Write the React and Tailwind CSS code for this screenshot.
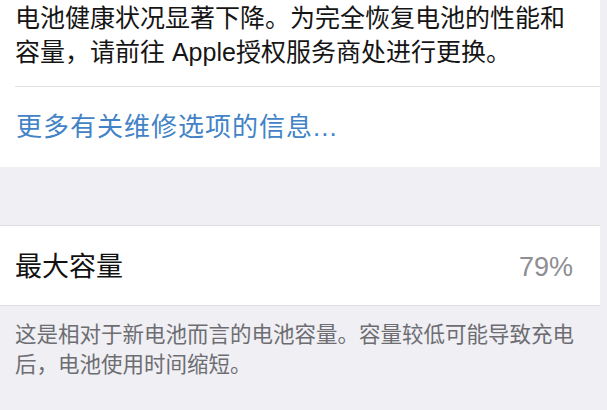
import React from 'react';

// 电池健康 · 设置页片段
const font = "font-['Liberation_Sans','Noto_Sans_CJK_SC',sans-serif]";

export default function App() {
  return (
    <div className={`w-[607px] h-[410px] overflow-hidden bg-[#efeff4] ${font}`}>
      <div className="w-[600px]">
        {/* 说明 + 链接 */}
        <section className="bg-white">
          <p className="pl-[15px] pr-[20px] pt-[1px] pb-[17px] text-[25px] leading-[34px] text-[#151515]">
            电池健康状况显著下降。为完全恢复电池的性能和容量，请前往 Apple授权服务商处进行更换。
          </p>
          <div className="ml-[15px] h-px bg-[#e2e2e6]" />
          <a href="#" className="flex h-[80px] items-center pl-[16px] text-[26px] tracking-[1px] text-[#4283c7]">
            更多有关维修选项的信息...
          </a>
        </section>

        <div className="h-[58px]" />

        {/* 最大容量 */}
        <section className="bg-white border-y border-[#dedee3]">
          <div className="flex h-[79px] items-center justify-between pl-[15px] pr-[27px] pt-[3px]">
            <span className="text-[27px] text-[#111]">最大容量</span>
            <span className="text-[27px] text-[#8e8e93]">79%</span>
          </div>
        </section>
        <p className="px-[15px] pt-[14px] text-[21.5px] leading-[30px] text-[#6d6d72]">
          这是相对于新电池而言的电池容量。容量较低可能导致充电后，电池使用时间缩短。
        </p>
      </div>
    </div>
  );
}
